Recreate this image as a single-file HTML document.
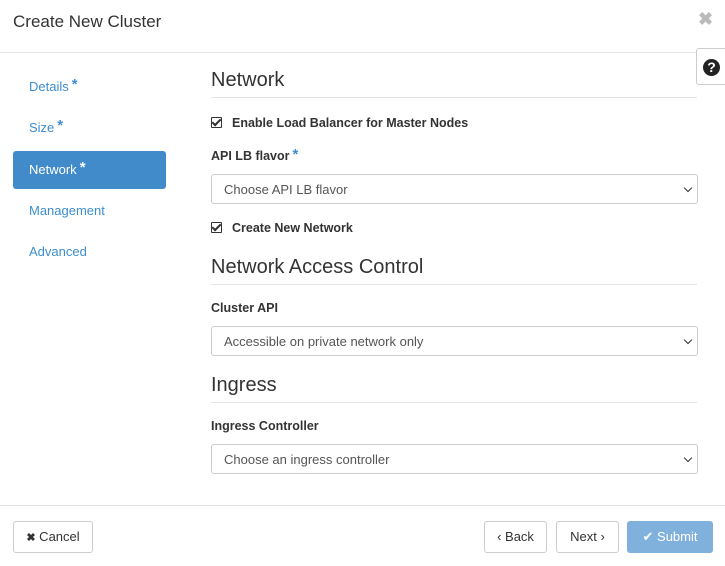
<!DOCTYPE html>
<html><head><style>
body{margin:0;width:725px;height:566px;background:#fff;font-family:"Liberation Sans",sans-serif;color:#333;position:relative;overflow:hidden}
.a{position:absolute}
.nav{font-size:13px;color:#3d8dd0;left:29px}
.star{font-size:15px;font-weight:bold;vertical-align:top;position:relative;top:-3px;margin-left:3px}
.h{left:211px;width:486px;font-size:20px;color:#333;border-bottom:1px solid #e5e5e5;padding-bottom:5px}
.lbl{left:211px;font-size:12.5px;font-weight:bold;color:#333}
.sel{left:211px;height:30px;border:1px solid #ccc;border-radius:3px;font-size:13px;color:#555;box-sizing:border-box;padding:7px 12px;width:487px}
.sel:after{content:"";position:absolute;right:6px;top:10px;width:5px;height:5px;border-right:1.5px solid #333;border-bottom:1.5px solid #333;transform:rotate(45deg)}
.cb{left:211px;font-size:12.5px;font-weight:bold}
.cb i{display:inline-block;width:9px;height:9px;border:1px solid #333;border-radius:1px;margin-right:10px;position:relative;top:1px}
.cb i:after{content:"";position:absolute;left:2px;top:-1px;width:3px;height:7px;border-right:2px solid #333;border-bottom:2px solid #333;transform:rotate(45deg)}
.btn{height:32px;border:1px solid #ccc;border-radius:3px;box-sizing:border-box;font-size:13px;color:#333;text-align:center;line-height:30px;top:521px}
</style></head><body>
<div class="a" style="left:13px;top:12px;font-size:17px">Create New Cluster</div>
<div class="a" style="left:698px;top:9px;font-size:18px;color:#bbb;font-weight:bold">✖</div>
<div class="a" style="left:0;top:52px;width:725px;border-top:1px solid #e5e5e5"></div>
<div class="a" style="left:696px;top:48px;width:32px;height:37px;border:1px solid #ccc;border-radius:3px;box-sizing:border-box;background:#fff"></div>
<div class="a" style="left:703px;top:59px;width:17px;height:17px;border-radius:50%;background:#222;color:#fff;font-weight:bold;font-size:14px;text-align:center;line-height:17px">?</div>
<div class="a nav" style="top:79px">Details<span class="star">*</span></div>
<div class="a nav" style="top:120px">Size<span class="star">*</span></div>
<div class="a" style="left:13px;top:151px;width:153px;height:38px;background:#428bca;border-radius:3px"></div>
<div class="a nav" style="top:162px;color:#fff">Network<span class="star">*</span></div>
<div class="a nav" style="top:203px">Management</div>
<div class="a nav" style="top:244px">Advanced</div>

<div class="a h" style="top:69px">Network</div>
<div class="a cb" style="top:116px"><i></i>Enable Load Balancer for Master Nodes</div>
<div class="a lbl" style="top:149px">API LB flavor<span class="star" style="color:#3d8dd0">*</span></div>
<div class="a sel" style="top:174px">Choose API LB flavor</div>
<div class="a cb" style="top:221px"><i></i>Create New Network</div>
<div class="a h" style="top:256px">Network Access Control</div>
<div class="a lbl" style="top:301px">Cluster API</div>
<div class="a sel" style="top:326px">Accessible on private network only</div>
<div class="a h" style="top:374px">Ingress</div>
<div class="a lbl" style="top:419px">Ingress Controller</div>
<div class="a sel" style="top:444px">Choose an ingress controller</div>

<div class="a" style="left:0;top:505px;width:725px;border-top:1px solid #e5e5e5"></div>
<div class="a btn" style="left:13px;width:80px"><b style="font-size:11px">✖</b> Cancel</div>
<div class="a btn" style="left:484px;width:63px">‹ Back</div>
<div class="a btn" style="left:556px;width:63px">Next ›</div>
<div class="a btn" style="left:627px;width:86px;background:#80b1dd;border-color:#80b1dd;color:#fff">✔ Submit</div>
</body></html>
